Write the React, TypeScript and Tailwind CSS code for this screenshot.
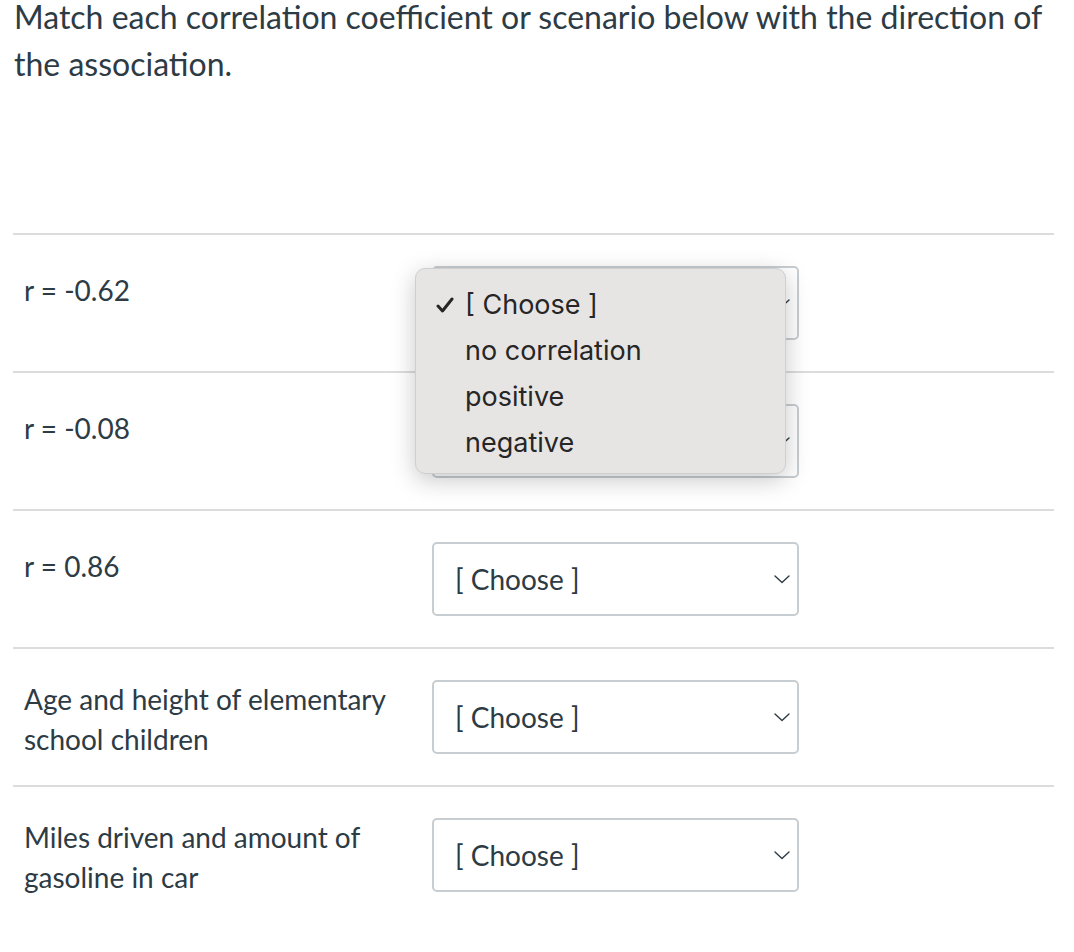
const rows = [
  { label: 'r = -0.62', pad: 'pt-[35px]' },
  { label: 'r = -0.08', pad: 'pt-[35px]' },
  { label: 'r = 0.86', pad: 'pt-[35px]' },
  { label: 'Age and height of elementary school children', pad: 'pt-[30px]' },
  { label: 'Miles driven and amount of gasoline in car', pad: 'pt-[30px]' }
];

const options = ['[ Choose ]', 'no correlation', 'positive', 'negative'];

function Chevron() {
  return (
    <svg viewBox="0 0 16 9" className="h-[9px] w-[16px]" aria-hidden="true">
      <polyline points="1,1 8,7.5 15,1" fill="none" stroke="#2d3b45" strokeWidth="1.4" strokeLinecap="round" strokeLinejoin="round" />
    </svg>
  );
}

function Check() {
  return (
    <svg viewBox="0 0 18 16" className="h-[16px] w-[18px]" aria-hidden="true">
      <path d="M2 9L6.5 14L16 2" fill="none" stroke="#262626" strokeWidth="3" strokeLinecap="round" strokeLinejoin="round" />
    </svg>
  );
}

function ChooseBox() {
  return (
    <div className="flex h-[74px] w-[367px] items-center justify-between rounded-[5px] border-2 border-[#c7cdd1] bg-white pl-[21px] pr-[7px]">
      <span className="text-[28px] text-[#2d3b45]">[ Choose ]</span>
      <Chevron />
    </div>
  );
}

export default function App() {
  return (
    <div className="min-h-screen bg-white font-['Lato','Liberation_Sans',sans-serif] text-[#2d3b45]">
      <p className="-mt-[7px] pl-[14px] pr-[16px] text-[32px] leading-[47px]">
        Match each correlation coefficient or scenario below with the direction of the association.
      </p>

      <div className="relative ml-[13px] mr-[20px] mt-[146px]">
        {rows.map((row) => (
          <div key={row.label} className="flex border-t-2 border-[#dcdcdc]">
            <div className={`w-[419px] pl-[11px] pr-[20px] text-[28px] leading-[40px] ${row.pad}`}>{row.label}</div>
            <div className="py-[31px]">
              <ChooseBox />
            </div>
          </div>
        ))}

        {/* open option list for the first select */}
        <div className="absolute left-[402px] top-[35px] w-[371px] rounded-[10px] border border-[#cfcfcf] bg-[#e6e5e4] pb-[7px] pt-[13px] font-['Inter','Noto_Sans',sans-serif] text-[27px] text-[#262626] shadow-[0_6px_24px_rgba(0,0,0,0.22)]">
          {options.map((opt, i) => (
            <div key={opt} className="flex h-[46px] items-center">
              <span className="flex w-[49px] justify-end pr-[11px]">{i === 0 ? <Check /> : null}</span>
              <span>{opt}</span>
            </div>
          ))}
        </div>
      </div>
    </div>
  );
}
